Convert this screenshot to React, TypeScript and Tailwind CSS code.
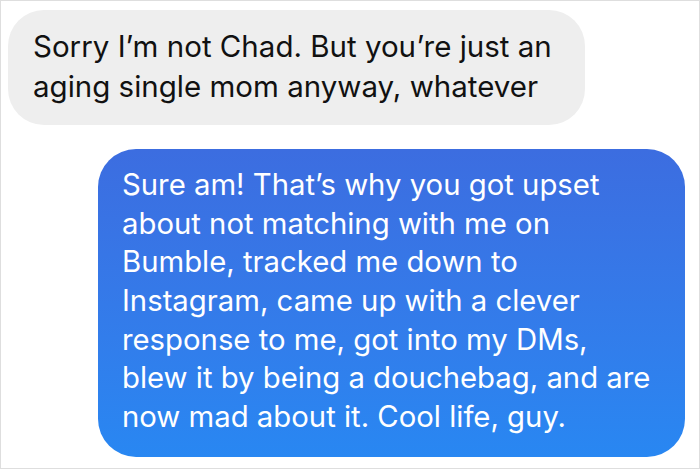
export default function App() {
  return (
    <div
      className="w-[700px] h-[469px] bg-white border border-[#dedede] overflow-hidden"
      style={{ fontFamily: 'Inter, "Liberation Sans", Arial, sans-serif' }}
    >
      <div className="ml-[7px] mt-[9px] w-[577px] h-[115px] rounded-[36px] bg-[#eeeeee] pl-[25px] pt-[16.3px] text-[29.5px] leading-[40px] text-[#111111]">
        <div className="whitespace-nowrap">Sorry I’m not Chad. But you’re just an</div>
        <div className="whitespace-nowrap">aging single mom anyway, whatever</div>
      </div>
      <div className="ml-[97px] mt-[24px] w-[587px] h-[308px] rounded-[38px] bg-gradient-to-b from-[#3c6de0] to-[#2887f2] pl-[24px] pt-[16.9px] text-[29.3px] leading-[38.7px] text-white">
        <div className="whitespace-nowrap">Sure am! That’s why you got upset</div>
        <div className="whitespace-nowrap">about not matching with me on</div>
        <div className="whitespace-nowrap">Bumble, tracked me down to</div>
        <div className="whitespace-nowrap">Instagram, came up with a clever</div>
        <div className="whitespace-nowrap">response to me, got into my DMs,</div>
        <div className="whitespace-nowrap">blew it by being a douchebag, and are</div>
        <div className="whitespace-nowrap">now mad about it. Cool life, guy.</div>
      </div>
    </div>
  )
}
